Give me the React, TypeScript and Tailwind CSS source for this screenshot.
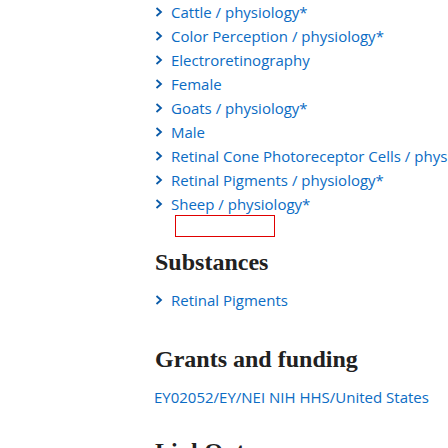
const meshTerms = [
  'Cattle / physiology*',
  'Color Perception / physiology*',
  'Electroretinography',
  'Female',
  'Goats / physiology*',
  'Male',
  'Retinal Cone Photoreceptor Cells / physiology*',
  'Retinal Pigments / physiology*',
  'Sheep / physiology*',
];

function Chevron() {
  return (
    <svg width="8" height="10" viewBox="0 0 8 10" className="shrink-0">
      <polyline points="1.5,1 6,5 1.5,9" fill="none" stroke="#0a5aa8" strokeWidth="1.8" />
    </svg>
  );
}

function TermRow({ label }: { label: string }) {
  return (
    <li className="flex items-center gap-[8px] h-[24px] whitespace-nowrap">
      <Chevron />
      <a href="#" className="text-[#0b6cc4]">{label}</a>
    </li>
  );
}

export default function App() {
  return (
    <div className="w-[448px] h-[448px] overflow-hidden bg-white font-['Segoe_UI','Open_Sans',sans-serif] text-[15px] leading-[22px]">
      <div className="ml-[155px]">
        {/* mesh terms */}
        <ul className="flex flex-col">
          {meshTerms.map((t) => (
            <TermRow key={t} label={t} />
          ))}
        </ul>
        <div className="ml-[20px] mt-[-1px] w-[100px] h-[22px] border border-[#e00000]" />

        {/* substances */}
        <h2 className="mt-[10px] font-['Liberation_Serif',serif] font-bold text-[24px] leading-[30px] text-[#212121]">
          Substances
        </h2>
        <ul className="mt-[11px]">
          <TermRow label="Retinal Pigments" />
        </ul>

        {/* grants */}
        <h2 className="mt-[32px] font-['Liberation_Serif',serif] font-bold text-[24px] leading-[30px] text-[#212121]">
          Grants and funding
        </h2>
        <a href="#" className="block mt-[12px] text-[#0b6cc4] whitespace-nowrap -ml-px">
          EY02052/EY/NEI NIH HHS/United States
        </a>

        <h2 className="mt-[28px] font-['Liberation_Serif',serif] font-bold text-[24px] leading-[30px] text-[#212121]">
          LinkOut - more resources
        </h2>
      </div>
    </div>
  );
}
